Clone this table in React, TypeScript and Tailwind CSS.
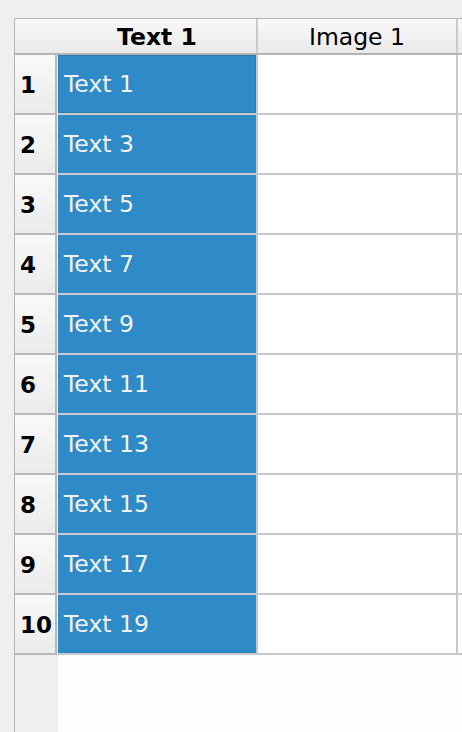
const rows = [1, 2, 3, 4, 5, 6, 7, 8, 9, 10];

const App = () => {
    return (
        <div
            className="w-[462px] h-[732px] bg-[#efefef] pl-[14px] pt-[18px] flex overflow-hidden"
            style={{ fontFamily: '"DejaVu Sans", "Liberation Sans", sans-serif' }}
        >
            <div className="flex-1 flex flex-col border-l border-t border-[#b4b4b4] bg-[#fefefe] overflow-hidden">
                {/* column headers */}
                <div className="flex h-[36px] shrink-0 border-b-2 border-[#b4b4b4] bg-gradient-to-b from-[#f8f8f8] to-[#eaeaea] text-[23.5px] text-black">
                    <div className="w-[43px] shrink-0" />
                    <div className="w-[200px] shrink-0 flex items-center justify-center pt-[3px] font-bold border-r-2 border-[#cacaca]">
                        Text 1
                    </div>
                    <div className="w-[200px] shrink-0 flex items-center justify-center pt-[3px] border-r-2 border-[#cacaca]">
                        Image 1
                    </div>
                    <div className="flex-1" />
                </div>

                <div className="flex flex-1">
                    {/* row headers */}
                    <div className="w-[43px] shrink-0 bg-[#efefef] flex flex-col">
                        {rows.map((n) => (
                            <div
                                key={n}
                                className="h-[60px] w-[42px] flex items-center pl-[5px] pt-[3px] font-bold text-[23px] text-black bg-gradient-to-b from-[#f9f9f9] to-[#ebebeb] border-r-2 border-b-2 border-[#b8b8b8]"
                            >
                                {n}
                            </div>
                        ))}
                    </div>

                    {/* cells */}
                    <div className="flex-1 flex flex-col">
                        {rows.map((n, i) => (
                            <div key={n} className="flex h-[60px] shrink-0">
                                <div className="w-[200px] shrink-0 border-r-2 border-b-2 border-[#c8c8c8]">
                                    <div
                                        className={
                                            i === 0
                                                ? "h-full bg-[#2f8bc7] border border-[#2a7fb8] flex items-center pl-[5px] pt-[1px] text-[23.5px] text-[#f2f2f2]"
                                                : "h-full bg-[#2f8bc7] flex items-center pl-[6px] pt-[2px] text-[23.5px] text-[#f2f2f2]"
                                        }
                                    >
                                        Text {n * 2 - 1}
                                    </div>
                                </div>
                                <div className="w-[200px] shrink-0 bg-white border-r-2 border-b-2 border-[#c8c8c8]" />
                                <div className="flex-1 bg-white border-b-2 border-[#c8c8c8]" />
                            </div>
                        ))}
                    </div>
                </div>
            </div>
        </div>
    );
};

export default App;
